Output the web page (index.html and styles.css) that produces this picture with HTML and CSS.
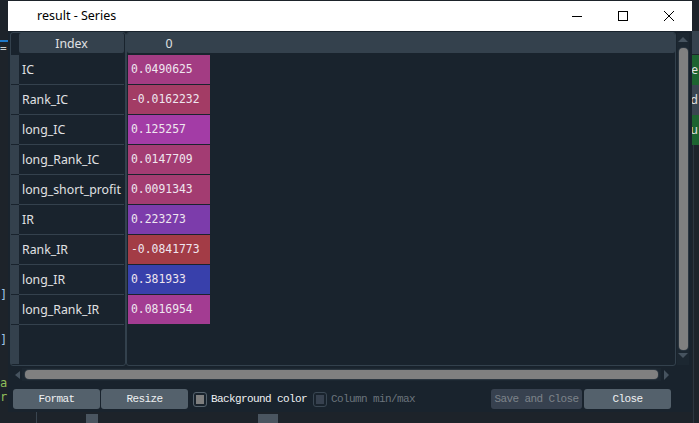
FILE: index.html
```html
<!DOCTYPE html>
<html>
<head>
<meta charset="utf-8">
<title>result - Series</title>
<link rel="stylesheet" href="styles.css">
</head>
<body>
<div class="desk">
  <div class="deco deco-blue"></div>
  <div class="deco deco-eq">=</div>
  <div class="deco deco-br1">]</div>
  <div class="deco deco-br2">]</div>
  <div class="deco deco-ac">ac</div>
  <div class="deco deco-rc">rc</div>
  <div class="deco deco-r-top"></div>
  <div class="deco deco-r1"><span class="rt">Use</span></div>
  <div class="deco deco-r2"><span class="rt">Add</span></div>
  <div class="deco deco-r3"><span class="rt">Valu</span></div>
  <div class="deco deco-rline"></div>
  <div class="deco deco-b1"></div>
  <div class="deco deco-b2"></div>
  <div class="deco deco-b3"></div>
</div>

<div class="window">
  <div class="titlebar">
    <span class="title">result - Series</span>
    <div class="ctrl"><svg width="12" height="12" viewBox="0 0 12 12"><line x1="1" y1="6.5" x2="11" y2="6.5" stroke="#000" stroke-width="1"/></svg></div>
    <div class="ctrl"><svg width="12" height="12" viewBox="0 0 12 12"><rect x="1.5" y="1.5" width="9" height="9" fill="none" stroke="#000" stroke-width="1"/></svg></div>
    <div class="ctrl"><svg width="12" height="12" viewBox="0 0 12 12"><path d="M1 1 L11 11 M11 1 L1 11" stroke="#000" stroke-width="1"/></svg></div>
  </div>

  <div class="body">
    <div class="tables">
      <div class="frame index-frame">
        <div class="hdr-row">
          <div class="corner"></div>
          <div class="hdr index-hdr">Index</div>
        </div>
        <div class="rows">
          <div class="row"><div class="vh"></div><div class="label">IC</div></div>
          <div class="row"><div class="vh"></div><div class="label">Rank_IC</div></div>
          <div class="row"><div class="vh"></div><div class="label">long_IC</div></div>
          <div class="row"><div class="vh"></div><div class="label">long_Rank_IC</div></div>
          <div class="row"><div class="vh"></div><div class="label">long_short_profit</div></div>
          <div class="row"><div class="vh"></div><div class="label">IR</div></div>
          <div class="row"><div class="vh"></div><div class="label">Rank_IR</div></div>
          <div class="row"><div class="vh"></div><div class="label">long_IR</div></div>
          <div class="row"><div class="vh"></div><div class="label">long_Rank_IR</div></div>
          <div class="row-fill"><div class="vh vh-fill"></div></div>
        </div>
      </div>

      <div class="frame data-frame">
        <div class="hdr data-hdr"><span class="col0">0</span></div>
        <div class="cells">
          <div class="cell" style="background:rgb(163,60,131)">0.0490625</div>
          <div class="cell" style="background:rgb(163,60,101)">-0.0162232</div>
          <div class="cell" style="background:rgb(163,60,166)">0.125257</div>
          <div class="cell" style="background:rgb(163,60,115)">0.0147709</div>
          <div class="cell" style="background:rgb(163,60,113)">0.0091343</div>
          <div class="cell" style="background:rgb(124,60,171)">0.223273</div>
          <div class="cell" style="background:rgb(163,60,70)">-0.0841773</div>
          <div class="cell" style="background:rgb(56,64,171)">0.381933</div>
          <div class="cell" style="background:rgb(163,60,146)">0.0816954</div>
        </div>
      </div>

      <div class="vscroll">
        <div class="arrow-up"></div>
        <div class="vhandle"></div>
        <div class="arrow-down"></div>
      </div>
    </div>

    <div class="hscroll">
      <div class="arrow-left"></div>
      <div class="htrack"><div class="hhandle"></div></div>
      <div class="arrow-right"></div>
    </div>

    <div class="buttons">
      <button class="btn btn-format">Format</button>
      <button class="btn btn-resize">Resize</button>
      <label class="check"><span class="box checked"></span><span class="check-text">Background color</span></label>
      <label class="check disabled"><span class="box"></span><span class="check-text">Column min/max</span></label>
      <span class="spacer"></span>
      <button class="btn btn-save" disabled>Save and Close</button>
      <button class="btn btn-close">Close</button>
    </div>
  </div>
</div>
</body>
</html>
```

FILE: styles.css
```css
* { box-sizing: border-box; }

html, body {
  margin: 0;
  padding: 0;
}

body {
  width: 699px;
  height: 423px;
  overflow: hidden;
  position: relative;
  background: #1d232a;
  font-family: "Noto Sans", "Open Sans", sans-serif;
}

/* ---------- desktop behind the dialog ---------- */
.desk { position: absolute; inset: 0; }
.deco { position: absolute; font-family: "DejaVu Sans Mono", monospace; font-size: 12px; line-height: 14px; }
.deco-blue { left: 0; top: 40px; width: 8px; height: 2px; background: #1f78c8; }
.deco-eq { left: 0; top: 42px; color: #c8ccd0; font-size: 11px; }
.deco-br1 { left: 0; top: 288px; color: #9cc4e8; }
.deco-br2 { left: 0; top: 333px; color: #9cc4e8; }
.deco-ac { left: 0; top: 376px; color: #8fbf5a; }
.deco-rc { left: 0; top: 390px; color: #8fbf5a; }
.deco-r-top { left: 692px; top: 31px; width: 7px; height: 23px; background: #36424e; }
.deco-r1, .deco-r2, .deco-r3 {
  left: 659px;
  width: 40px;
  height: 30px;
  color: #e0e1e3;
  font-family: "Noto Sans", sans-serif;
  font-size: 12px;
  line-height: 30px;
  text-align: right;
  padding-right: 1px;
}
.deco-r1 { top: 55px; background: #1d6330; }
.deco-r2 { top: 85px; background: #3a4550; }
.deco-r3 { top: 115px; background: #1d6330; }
.deco-rline { left: 693px; top: 145px; width: 1px; height: 278px; background: #2c3640; }
.deco-b1 { left: 36px; top: 412px; width: 1px; height: 11px; background: #3a4550; }
.deco-b2 { left: 86px; top: 414px; width: 12px; height: 9px; background: #4a5560; }
.deco-b3 { left: 258px; top: 414px; width: 20px; height: 9px; background: #4a5560; }

/* ---------- dialog window ---------- */
.window {
  position: absolute;
  left: 8px;
  top: 1px;
  width: 684px;
  height: 411px;
  background: #19232d;
  display: flex;
  flex-direction: column;
}

.titlebar {
  height: 30px;
  flex: 0 0 30px;
  background: #ffffff;
  display: flex;
  align-items: center;
}

.title {
  flex: 1;
  padding-left: 29px;
  font-size: 12.5px;
  color: #000;
  line-height: 30px;
}

.ctrl {
  width: 46px;
  height: 30px;
  display: flex;
  align-items: center;
  justify-content: center;
}
.ctrl svg { display: block; }

.body {
  flex: 1;
  display: flex;
  flex-direction: column;
  padding: 1px 3px 0 2px;
}

.tables {
  display: flex;
  height: 334px;
  flex: 0 0 334px;
}

.frame {
  border: 1px solid #33414d;
  border-radius: 3px;
  height: 334px;
  display: flex;
  flex-direction: column;
}

.index-frame { width: 116px; }
.data-frame { width: 550px; }

.hdr-row {
  display: flex;
  height: 20px;
  margin-bottom: 2px;
}

.corner { width: 8px; }

.hdr {
  background: #34414d;
  color: #e0e1e3;
  font-size: 12.3px;
  line-height: 22px;
  height: 20px;
  overflow: hidden;
}

.index-hdr {
  width: 105px;
  text-align: center;
  border-radius: 2px;
}

.rows { display: flex; flex-direction: column; flex: 1; }

.row {
  display: flex;
  height: 30px;
}

.vh {
  width: 8px;
  height: 29px;
  background: #34414d;
}

.label {
  width: 105px;
  height: 30px;
  border-bottom: 1px solid #34414d;
  color: #e0e1e3;
  font-size: 12.3px;
  line-height: 29px;
  padding-left: 3px;
  white-space: nowrap;
}

.row-fill { flex: 1; display: flex; }
.vh-fill { height: 39px; }

.data-hdr {
  margin-bottom: 2px;
  border-radius: 2px;
}
.col0 {
  display: block;
  width: 84px;
  text-align: center;
}

.cells { display: flex; flex-direction: column; }

.cell {
  width: 82px;
  height: 29px;
  margin-left: 1px;
  margin-bottom: 1px;
  color: #efe6ef;
  font-family: "DejaVu Sans Mono", monospace;
  font-size: 11.4px;
  line-height: 29px;
  padding-left: 3px;
  white-space: nowrap;
}

/* vertical scrollbar */
.vscroll {
  width: 12px;
  margin-left: 1px;
  margin-top: 1px;
  height: 332px;
  display: flex;
  flex-direction: column;
  align-items: center;
  background: #1c2731;
}
.arrow-up {
  margin-top: 4px;
  width: 0; height: 0;
  border-left: 5px solid transparent;
  border-right: 5px solid transparent;
  border-bottom: 5px solid #46535f;
}
.vhandle {
  margin-top: 6px;
  width: 9px;
  height: 302px;
  border-radius: 4px;
  background: #808080;
  box-shadow: 0 0 0 1px #2b3640;
}
.arrow-down {
  margin-top: 3px;
  width: 0; height: 0;
  border-left: 5px solid transparent;
  border-right: 5px solid transparent;
  border-top: 5px solid #46535f;
}

/* horizontal scrollbar */
.hscroll {
  margin-top: 2px;
  height: 13px;
  flex: 0 0 13px;
  display: flex;
  align-items: center;
  padding-left: 5px;
}
.arrow-left {
  width: 0; height: 0;
  border-top: 4px solid transparent;
  border-bottom: 4px solid transparent;
  border-right: 5px solid #46535f;
}
.htrack {
  margin-left: 2px;
  width: 639px;
  height: 13px;
  padding: 2px 3px;
  background: #1c2731;
}
.hhandle {
  height: 9px;
  border-radius: 4px;
  background: #808080;
  box-shadow: 0 0 0 1px #2b3640;
}
.arrow-right {
  margin-left: 3px;
  width: 0; height: 0;
  border-top: 5px solid transparent;
  border-bottom: 5px solid transparent;
  border-left: 5px solid #46535f;
}

/* bottom buttons */
.buttons {
  margin-top: 8px;
  height: 20px;
  display: flex;
  align-items: center;
  padding-left: 3px;
  padding-right: 18px;
}

.btn {
  height: 20px;
  border: none;
  border-radius: 3px;
  background: #54616c;
  color: #eef0f2;
  font-family: "Liberation Mono", "DejaVu Sans Mono", monospace;
  font-size: 11px;
  letter-spacing: -0.6px;
  padding: 0;
  margin: 0;
  line-height: 20px;
  text-align: center;
}
.btn-format { width: 87px; }
.btn-resize { width: 87px; margin-left: 1px; }
.btn-save { width: 91px; background: #37414f; color: #7d838a; }
.btn-close { width: 87px; margin-left: 2px; }

.check {
  display: flex;
  align-items: center;
  margin-left: 5px;
}
.check + .check { margin-left: 6px; }

.box {
  width: 14px;
  height: 15px;
  border: 1px solid #56636e;
  border-radius: 3px;
  padding: 2px;
  display: block;
}
.box::after {
  content: "";
  display: block;
  width: 100%;
  height: 100%;
  background: #37414f;
}
.box.checked::after { background: #7e7e7e; }
.check.disabled .box { border-color: #3a4753; }

.check-text {
  margin-left: 4px;
  color: #eef0f2;
  font-family: "Liberation Mono", "DejaVu Sans Mono", monospace;
  font-size: 11px;
  letter-spacing: -0.6px;
  white-space: nowrap;
}
.check.disabled .check-text { color: #6b747c; }

.spacer { flex: 1; }
```
